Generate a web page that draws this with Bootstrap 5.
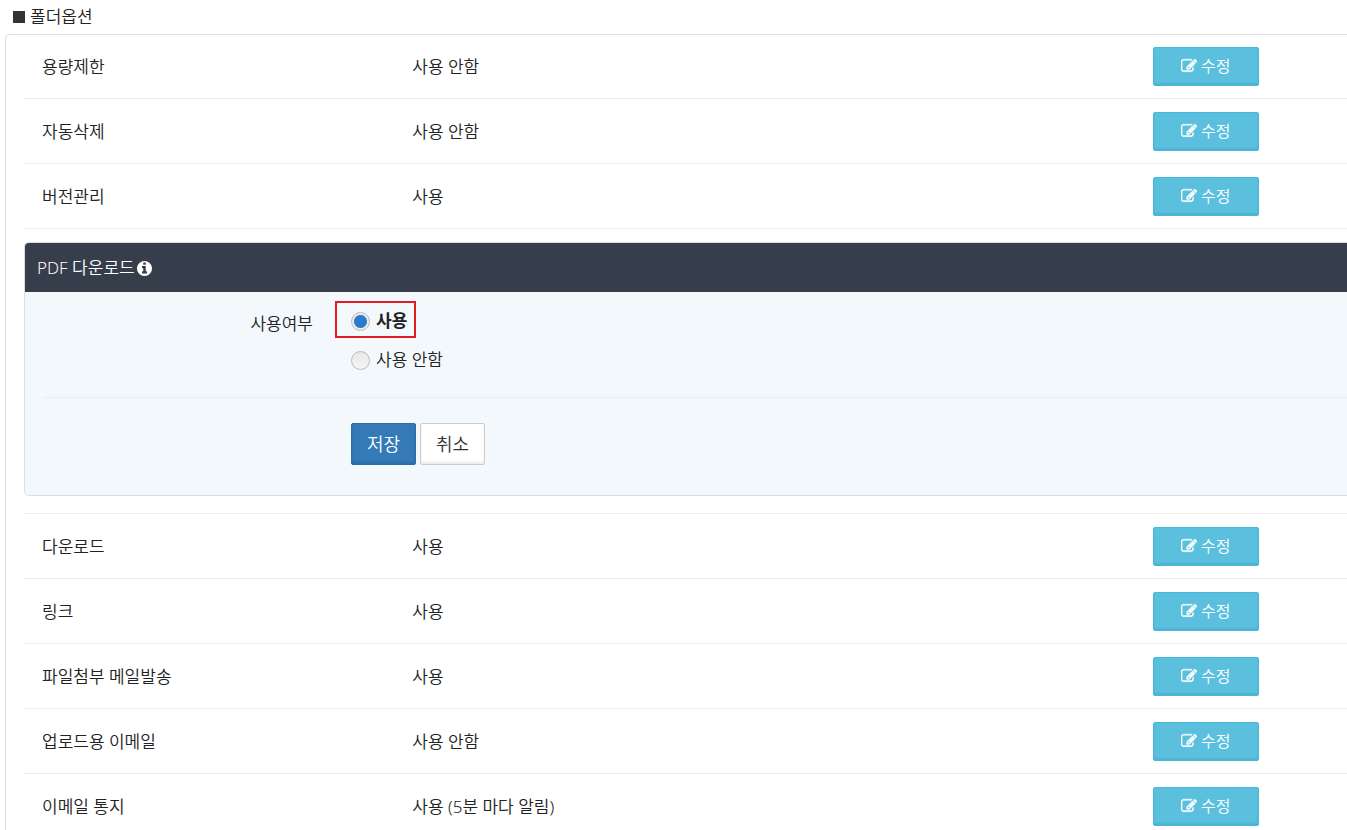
<!DOCTYPE html>
<html lang="ko">
<head>
<meta charset="utf-8">
<meta name="viewport" content="width=device-width, initial-scale=1">
<title>폴더옵션</title>
<link href="https://cdn.jsdelivr.net/npm/bootstrap@5.3.0/dist/css/bootstrap.min.css" rel="stylesheet">
<style>
  body { font: 350 17px/24px "Noto Sans", "Noto Sans CJK KR", sans-serif; color: #222; background: #fff; scrollbar-width: none; }
  body::-webkit-scrollbar, html::-webkit-scrollbar { display: none; }
  .page-heading { font-size: 17px; line-height: 24px; font-weight: 350; padding: 5px 0 5px 13px; gap: 5px; }
  .heading-mark { width: 12px; height: 12px; background: #333; }
  .option-box { border: solid #dddde6; border-width: 1px 0 0 1px; border-radius: 5px 0 0 0; margin-left: 5px; padding-left: 18px; }
  .option-row { display: grid; grid-template-columns: 370fr 740fr 194fr; align-items: center; padding: 13px 0 12px 18px; border-bottom: 1px solid #ebebeb; }
  .option-list:first-child .option-row:first-child { padding-top: 12px; }
  .option-list + .option-panel { margin-top: 13px; }
  .option-panel + .option-list { margin-top: 17px; border-top: 1px solid #ebebeb; }
  .btn { font-family: inherit; font-weight: 350; border-radius: 2px; }
  .btn-modify { width: 106px; height: 39px; padding: 0 0 2px; font-size: 16px; color: #fff; background: #5bc0de; border-color: #46b8da; box-shadow: inset 0 -2px 2px #4fb2d0; }
  .btn-modify:hover { color: #fff; background: #46b8da; }
  .option-panel { border: solid #dddde0; border-width: 1px 0 1px 1px; border-radius: 5px 0 0 5px; background: #f3f8fd; overflow: hidden; }
  .panel-title { background: #363d4b; color: #fff; font-size: 17px; font-weight: 350; line-height: 24px; padding: 13px 12px 12px; gap: 2px; }
  .panel-form { padding: 9px 0 30px 18px; }
  .form-line { display: grid; grid-template-columns: 270fr 1012fr; column-gap: 22px; }
  .form-name { font-size: 17px; font-weight: 350; line-height: 24px; padding-top: 11px; text-align: right; }
  .choice { width: fit-content; height: 37px; padding: 3px 7px 0 14px; border: 2px solid transparent; }
  .choice + .choice { margin-top: 2px; }
  .choice-marked { border-color: #e31b1f; }
  .choice input { appearance: none; width: 19px; height: 19px; margin: 0 6px 0 0; border: 1px solid #bbb; border-radius: 50%; background: linear-gradient(#e8e8e8, #f6f6f6); flex: none; }
  .choice input:checked { background: radial-gradient(circle, #2b7acb 6px, #ececec 7px); }
  .choice input:checked + label { font-weight: 700; }
  .form-split { margin: 20px 0 25px; border-top: 1px solid #e9edf0; opacity: 1; }
  .form-buttons { padding-left: 16px; gap: 4px; }
  .btn-form { width: 65px; height: 42px; padding: 0; font-size: 18px; }
  .btn-save { color: #fff; background: #337ab7; border-color: #2e6da4; box-shadow: inset 0 -2px 2px #2e6da4; }
  .btn-save:hover { color: #fff; background: #2e6da4; }
  .btn-cancel { color: #333; background: #fff; border-color: #ccc; box-shadow: inset 0 -2px 2px #ececec; }
  .btn-cancel:hover { background: #eee; border-color: #ccc; }
  .glyph { fill: currentColor; flex: none; }
</style>
</head>
<body>
<svg class="d-none" aria-hidden="true">
  <symbol id="edit" viewBox="0 0 1792 1792"><path d="M888 1184l116-116-152-152-116 116v56h96v96h56zm440-720q-16-16-33 1l-350 350q-17 17-1 33t33-1l350-350q17-17 1-33zm80 594v190q0 119-84.500 203.500t-203.500 84.500h-832q-119 0-203.500-84.500t-84.500-203.500v-832q0-119 84.500-203.500t203.500-84.500h832q63 0 117 25 15 7 18 23 3 17-9 29l-49 49q-14 14-32 8-23-6-45-6h-832q-66 0-113 47t-47 113v832q0 66 47 113t113 47h832q66 0 113-47t47-113v-126q0-13 9-22l64-64q15-15 35-7t20 29zm-96-738l288 288-672 672h-288v-288zm444 132l-92 92-288-288 92-92q28-28 68-28t68 28l152 152q28 28 28 68t-28 68z" stroke="currentColor" stroke-width="50"/></symbol>
  <symbol id="info" viewBox="128 128 1536 1536"><path d="M1152 1376v-160q0-14-9-23t-23-9h-96v-512q0-14-9-23t-23-9h-320q-14 0-23 9t-9 23v160q0 14 9 23t23 9h96v320h-96q-14 0-23 9t-9 23v160q0 14 9 23t23 9h448q14 0 23-9t9-23zm-128-896v-160q0-14-9-23t-23-9h-192q-14 0-23 9t-9 23v160q0 14 9 23t23 9h192q14 0 23-9t9-23zm640 416q0 209-103 385.500t-279.500 279.500-385.500 103-385.500-103-279.500-279.500-103-385.500 103-385.500 279.500-279.500 385.500-103 385.500 103 279.500 279.500 103 385.500z"/></symbol>
</svg>
<main>
  <h1 class="page-heading d-flex align-items-center m-0"><span class="heading-mark"></span>폴더옵션</h1>
  <div class="option-box">
    <ul class="option-list list-unstyled mb-0">
      <li class="option-row"><span>용량제한</span><span>사용 안함</span><button type="button" class="btn btn-modify d-flex align-items-center justify-content-center gap-1"><svg class="glyph" width="16" height="16"><use href="#edit"/></svg>수정</button></li>
      <li class="option-row"><span>자동삭제</span><span>사용 안함</span><button type="button" class="btn btn-modify d-flex align-items-center justify-content-center gap-1"><svg class="glyph" width="16" height="16"><use href="#edit"/></svg>수정</button></li>
      <li class="option-row"><span>버전관리</span><span>사용</span><button type="button" class="btn btn-modify d-flex align-items-center justify-content-center gap-1"><svg class="glyph" width="16" height="16"><use href="#edit"/></svg>수정</button></li>
    </ul>
    <section class="option-panel">
      <h2 class="panel-title d-flex align-items-center m-0">PDF 다운로드<svg class="glyph" width="15" height="15"><use href="#info"/></svg></h2>
      <form class="panel-form">
        <div class="form-line" role="radiogroup" aria-labelledby="use-name">
          <div class="form-name" id="use-name">사용여부</div>
          <div>
            <div class="choice choice-marked d-flex align-items-center"><input type="radio" name="use" id="use-on" checked><label for="use-on">사용</label></div>
            <div class="choice d-flex align-items-center"><input type="radio" name="use" id="use-off"><label for="use-off">사용 안함</label></div>
          </div>
        </div>
        <hr class="form-split">
        <div class="form-line">
          <div></div>
          <div class="form-buttons d-flex"><button type="button" class="btn btn-form btn-save">저장</button><button type="button" class="btn btn-form btn-cancel">취소</button></div>
        </div>
      </form>
    </section>
    <ul class="option-list list-unstyled mb-0">
      <li class="option-row"><span>다운로드</span><span>사용</span><button type="button" class="btn btn-modify d-flex align-items-center justify-content-center gap-1"><svg class="glyph" width="16" height="16"><use href="#edit"/></svg>수정</button></li>
      <li class="option-row"><span>링크</span><span>사용</span><button type="button" class="btn btn-modify d-flex align-items-center justify-content-center gap-1"><svg class="glyph" width="16" height="16"><use href="#edit"/></svg>수정</button></li>
      <li class="option-row"><span>파일첨부 메일발송</span><span>사용</span><button type="button" class="btn btn-modify d-flex align-items-center justify-content-center gap-1"><svg class="glyph" width="16" height="16"><use href="#edit"/></svg>수정</button></li>
      <li class="option-row"><span>업로드용 이메일</span><span>사용 안함</span><button type="button" class="btn btn-modify d-flex align-items-center justify-content-center gap-1"><svg class="glyph" width="16" height="16"><use href="#edit"/></svg>수정</button></li>
      <li class="option-row"><span>이메일 통지</span><span>사용 (5분 마다 알림)</span><button type="button" class="btn btn-modify d-flex align-items-center justify-content-center gap-1"><svg class="glyph" width="16" height="16"><use href="#edit"/></svg>수정</button></li>
    </ul>
  </div>
</main>
<script src="https://cdn.jsdelivr.net/npm/bootstrap@5.3.0/dist/js/bootstrap.bundle.min.js"></script>
</body>
</html>
